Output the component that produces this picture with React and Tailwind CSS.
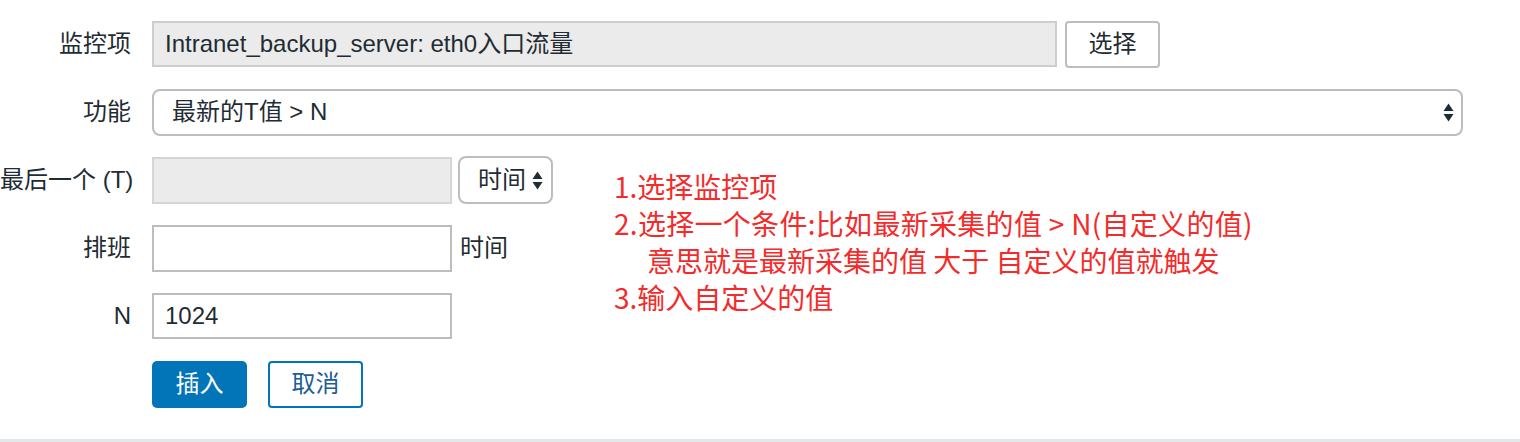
import React from "react";

const font = { fontFamily: '"Liberation Sans", "Noto Sans CJK SC", sans-serif' };

function Arrows() {
  return (
    <svg width="11" height="19" viewBox="0 0 11 19" className="shrink-0">
      <path d="M5.5 0.5 L10.5 8 L0.5 8 Z" fill="#1f2c33" />
      <path d="M0.5 11 L10.5 11 L5.5 18.5 Z" fill="#1f2c33" />
    </svg>
  );
}

function Row({ label, children }) {
  return (
    <div className="flex items-center h-[46px]">
      <div className="w-[131px] shrink-0 text-right whitespace-nowrap text-[24px] text-[#1f2c33]">
        {label}
      </div>
      <div className="ml-[21px] flex items-center h-full">{children}</div>
    </div>
  );
}

export default function App() {
  return (
    <div style={font} className="relative w-[1520px] h-[442px] bg-white overflow-hidden">
      <div className="flex flex-col gap-[22px] pt-[21px]">
        <Row label="监控项">
          <div className="w-[905px] h-[46px] border-2 border-[#cdcdcd] bg-[#ebebeb] pl-[11px] flex items-center text-[24px] text-[#1f2c33] whitespace-nowrap">
            Intranet_backup_server: eth0入口流量
          </div>
          <button className="ml-[8px] w-[95px] h-[47px] border-2 border-[#bdbdbd] rounded-[4px] bg-white text-[24px] text-[#1f2c33]">
            选择
          </button>
        </Row>

        <Row label="功能">
          <div className="w-[1311px] h-[47px] border-2 border-[#bdbdbd] rounded-[8px] bg-white pl-[18px] pr-[7px] flex items-center justify-between text-[24px] text-[#1f2c33]">
            <span>最新的T值 &gt; N</span>
            <Arrows />
          </div>
        </Row>

        <Row label="最后一个 (T)">
          <div className="w-[300px] h-[47px] border-2 border-[#d5d5d5] bg-[#ebebeb]" />
          <div className="ml-[6px] w-[95px] h-[48px] border-2 border-[#bdbdbd] rounded-[8px] bg-white pl-[18px] pr-[8px] flex items-center justify-between text-[24px] text-[#1f2c33]">
            <span>时间</span>
            <Arrows />
          </div>
        </Row>

        <Row label="排班">
          <div className="w-[300px] h-[47px] border-2 border-[#bdbdbd] bg-white" />
          <span className="ml-[8px] text-[24px] text-[#1f2c33]">时间</span>
        </Row>

        <Row label="N">
          <div className="w-[300px] h-[46px] border-2 border-[#bdbdbd] bg-white pl-[11px] flex items-center text-[24px] text-[#1f2c33]">
            1024
          </div>
        </Row>

        <Row label="">
          <button className="w-[95px] h-[47px] rounded-[5px] bg-[#0275b8] text-white text-[24px]">
            插入
          </button>
          <button className="ml-[21px] w-[95px] h-[47px] rounded-[4px] border-2 border-[#0275b8] bg-white text-[#1d5e94] text-[24px]">
            取消
          </button>
        </Row>
      </div>

      <div className="absolute left-0 right-0 bottom-0 h-[3px] bg-[#e3e8e8]" />

      <div
        className="absolute left-[614px] top-[168px] text-[28px] leading-[37px] text-[#f42b2b] whitespace-nowrap"
        style={{ fontFamily: '"Noto Sans CJK SC", "Liberation Sans", sans-serif' }}
      >
        <div>1.选择监控项</div>
        <div className="tracking-[0.3px]">2.选择一个条件:比如最新采集的值 &gt; N(自定义的值)</div>
        <div className="pl-[33px]">意思就是最新采集的值 大于 自定义的值就触发</div>
        <div>3.输入自定义的值</div>
      </div>
    </div>
  );
}
